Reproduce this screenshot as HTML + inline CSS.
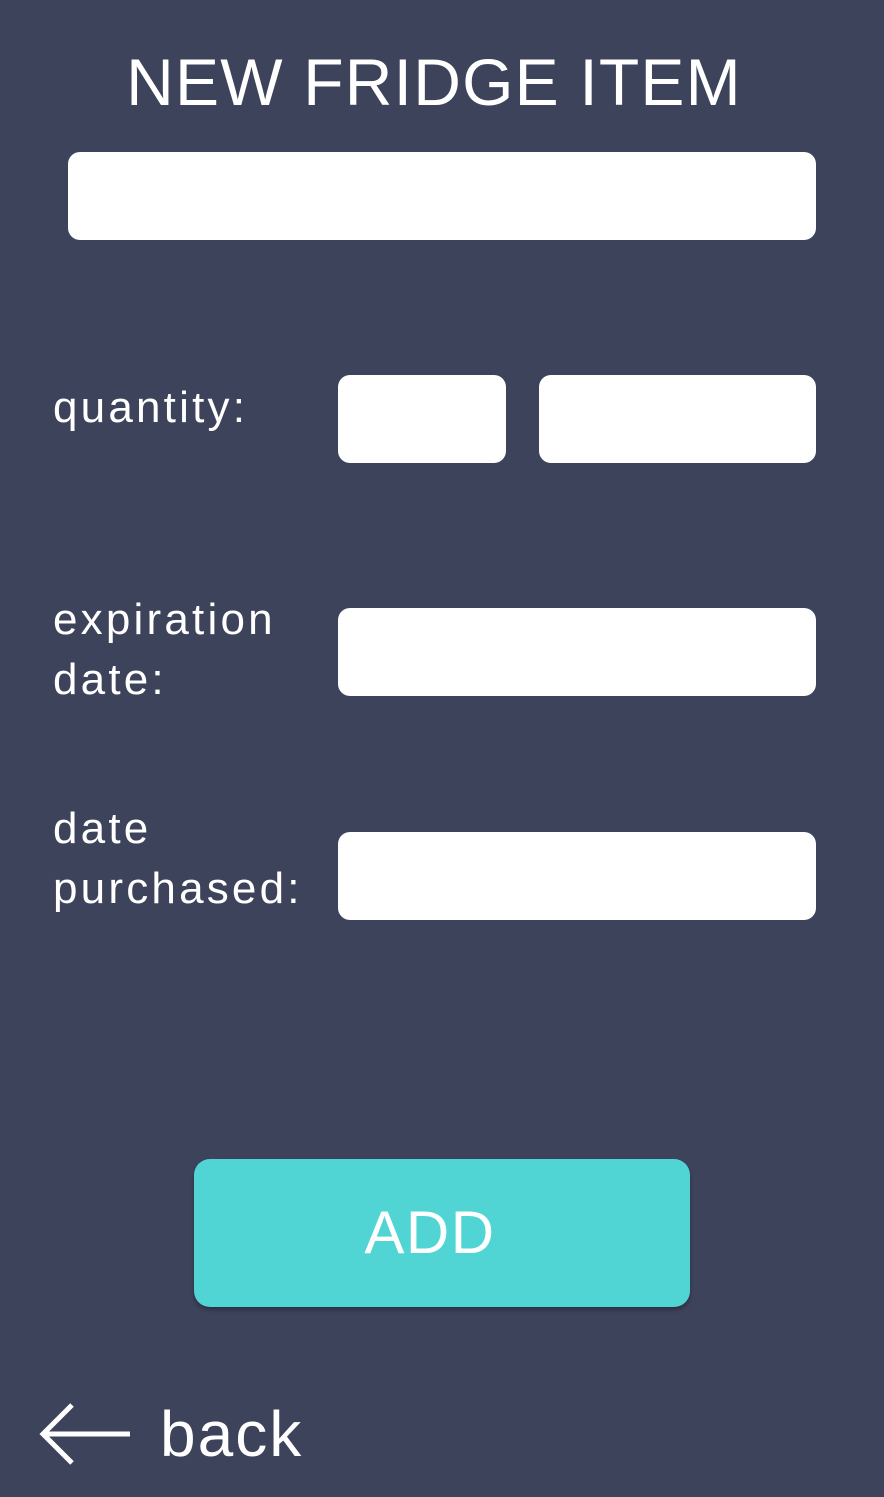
<!DOCTYPE html>
<html><head><style>
body{margin:0;width:884px;height:1497px;background:#3e435c;font-family:"Liberation Sans",sans-serif;color:#fff;position:relative;overflow:hidden}
.a{position:absolute}
.box{position:absolute;background:#fff;border-radius:12px}
.lbl{position:absolute;font-size:44px;line-height:60px;left:53px;letter-spacing:3.2px}
</style></head><body>
<div class="a" style="left:-8px;width:884px;top:42px;text-align:center;font-size:66px;line-height:80px;letter-spacing:1.2px">NEW FRIDGE ITEM</div>
<div class="box" style="left:68px;top:152px;width:748px;height:88px"></div>
<div class="lbl" style="top:378px">quantity:</div>
<div class="box" style="left:338px;top:375px;width:168px;height:88px"></div>
<div class="box" style="left:539px;top:375px;width:277px;height:88px"></div>
<div class="lbl" style="top:590px">expiration<br>date:</div>
<div class="box" style="left:338px;top:608px;width:478px;height:88px"></div>
<div class="lbl" style="top:799px">date<br>purchased:</div>
<div class="box" style="left:338px;top:832px;width:478px;height:88px"></div>
<div class="a" style="left:194px;top:1159px;width:496px;height:148px;background:#51d4d4;border-radius:16px;box-shadow:0 3px 4px rgba(0,0,0,.3);"></div>
<div class="a" style="left:182px;top:1159px;width:496px;height:148px;text-align:center;line-height:148px;font-size:60px;letter-spacing:1.5px">ADD</div>
<svg class="a" style="left:38px;top:1400px" width="96" height="68"><path d="M92 34H6M34 5L5 34L34 63" stroke="#fff" stroke-width="5" fill="none"/></svg>
<div class="a" style="left:160px;top:1396px;font-size:64px;line-height:76px;letter-spacing:2px">back</div>
</body></html>
